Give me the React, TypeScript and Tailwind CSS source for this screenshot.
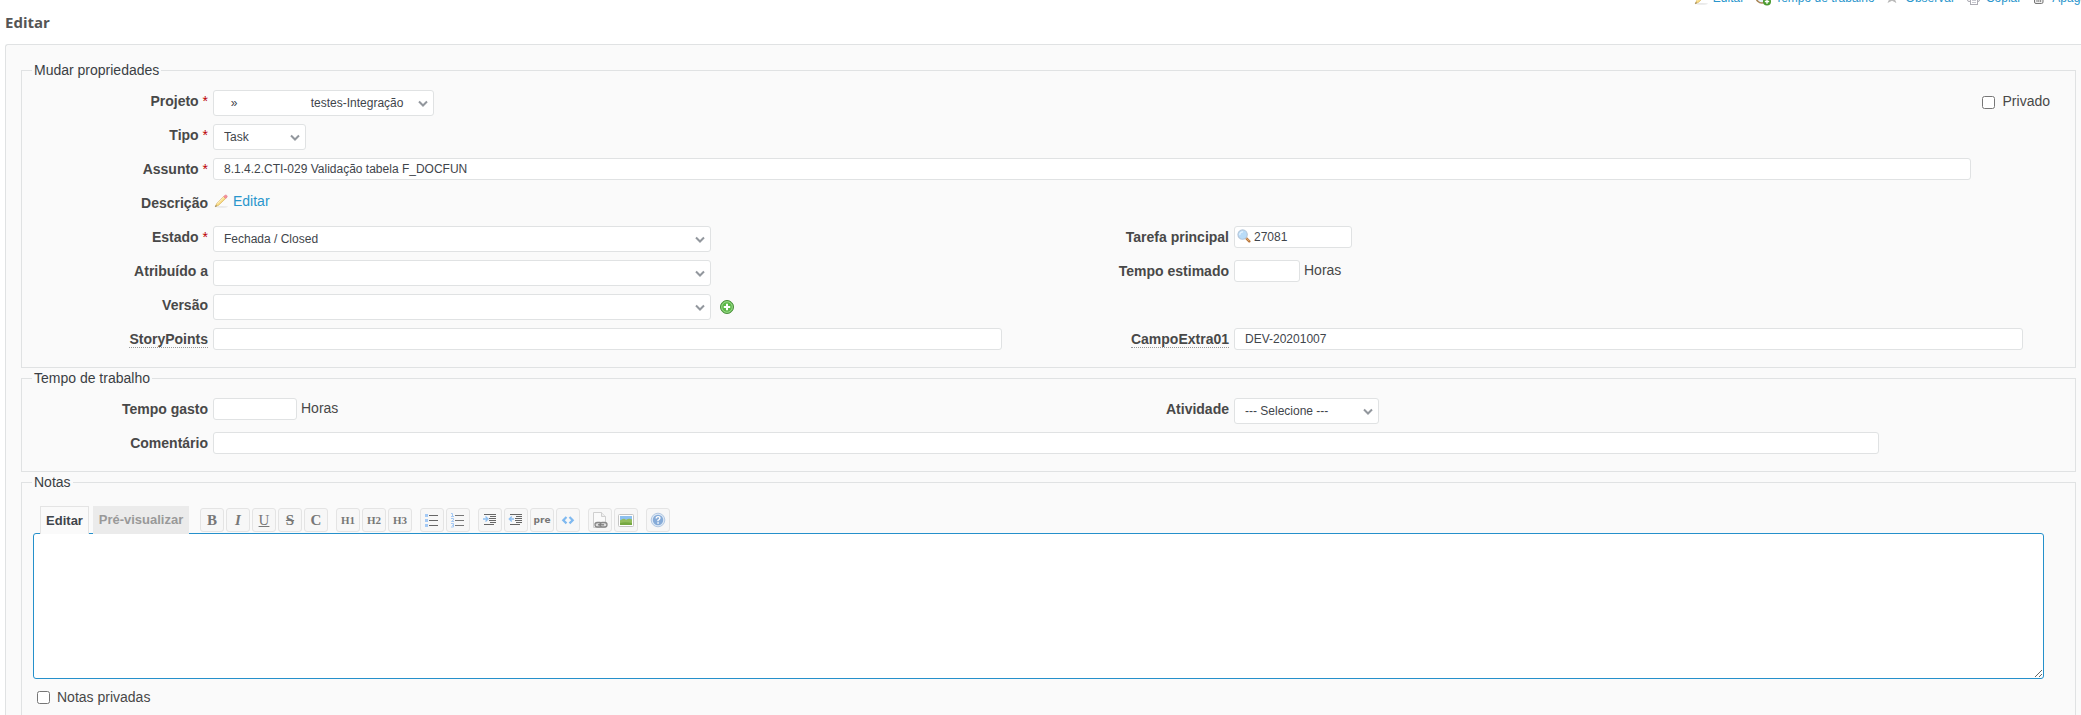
import type { ReactNode } from "react";

/* ---------- Icons ---------- */

function PencilIcon() {
  return (
    <svg width="16" height="16" viewBox="-1 -1 18 18" className="shrink-0">
      <ellipse cx="9" cy="14.500" rx="7" ry="1" fill="#e8e8e8" />
      <path d="M1.500 14.500 3.300 10.800 11 3 13.200 5.200 5.300 12.800z" fill="#f9dc84" stroke="#d3a94e" strokeWidth=".7" />
      <path d="M4 11 11.400 3.800" stroke="#fff6d0" strokeWidth="1" />
      <path d="M11 3 12.500 1.500q1-.8 2 .2t.3 2.100L13.200 5.200z" fill="#f4909a" stroke="#e07c88" strokeWidth=".6" />
      <path d="M1.500 14.500 2.200 12.700 3.400 13.600z" fill="#555" />
    </svg>
  );
}

function ClockAddIcon() {
  return (
    <svg width="16" height="16" viewBox="0 0 16 16" className="shrink-0">
      <circle cx="7" cy="7" r="6" fill="#e8f1fa" stroke="#a98555" strokeWidth="1.600" />
      <path d="M7 3v4l3 1" fill="none" stroke="#666" />
      <circle cx="12" cy="11.500" r="4" fill="#4a9a2f" />
      <path d="M12 9.300v4.400M9.800 11.500h4.400" stroke="#fff" strokeWidth="1.400" />
    </svg>
  );
}

function StarIcon() {
  return (
    <svg width="16" height="16" viewBox="0 0 16 16" className="shrink-0">
      <path d="m6 2 1.600 4H12L8.600 8.800 10.500 13 6 10.700 1.500 13 3.400 8.800 0 6h4.400z" fill="#b9b9b9" />
    </svg>
  );
}

function PrinterIcon() {
  return (
    <svg width="16" height="16" viewBox="0 0 16 16" className="shrink-0">
      <rect x="1.500" y="5.500" width="12" height="6" rx="1.500" fill="#f2f2f2" stroke="#adadb5" />
      <rect x="4.500" y="8.500" width="7" height="6" fill="#fff" stroke="#adadb5" />
      <path d="M6 10.500h4M6 12.500h4" stroke="#c8c8d0" />
    </svg>
  );
}

function TrashIcon() {
  return (
    <svg width="16" height="16" viewBox="0 0 16 16" className="shrink-0">
      <path d="M2.500 4.500h8.500V12q0 1.500-1.500 1.500H4Q2.500 13.500 2.500 12z" fill="#eee" stroke="#777" />
      <path d="M5 6v6M6.800 6v6M8.600 6v6" stroke="#888" />
    </svg>
  );
}

function SearchIcon() {
  return (
    <svg width="14" height="14" viewBox="0 0 15 15">
      <path d="m9.800 9.800 3.400 3.400" stroke="#b8743a" strokeWidth="2.600" strokeLinecap="round" />
      <path d="m10 9.800 3 3" stroke="#eab676" strokeWidth="1" />
      <circle cx="6" cy="6" r="5" fill="#b9dcf8" stroke="#b4c6da" strokeWidth="1.200" />
      <path d="M3 6.500A3.200 3.200 0 0 1 6.500 3" fill="none" stroke="#e6f4ff" strokeWidth="1.400" />
    </svg>
  );
}

function AddIcon() {
  return (
    <svg width="16" height="16" viewBox="0 0 16 16">
      <circle cx="8" cy="8" r="6.500" fill="#5cb848" stroke="#4b8f3c" />
      <circle cx="8" cy="8" r="5.300" fill="none" stroke="#a5dc96" strokeWidth=".9" />
      <path d="M8 4.800v6.400M4.800 8h6.400" stroke="#fff" strokeWidth="2" />
    </svg>
  );
}

function ChevronIcon() {
  return (
    <svg width="10" height="8" viewBox="0 0 10 8" className="pointer-events-none absolute right-[6px] top-[10px]">
      <path d="M1 1.500 5 5.500 9 1.500" fill="none" stroke="#92979d" strokeWidth="2" />
    </svg>
  );
}

function BulletListIcon() {
  return (
    <svg width="16" height="16" viewBox="0 0 16 16">
      <path d="M1 2h3v3H1zM1 7h3v3H1zM1 12h3v3H1z" fill="#a3c9f5" />
      <path d="M5 3.500h9M5 8.500h9M5 13.500h9" stroke="#666" />
    </svg>
  );
}

function NumberListIcon() {
  return (
    <svg width="16" height="16" viewBox="0 0 16 16">
      <path
        d="M1 1.500h1.500V4M1 4.500h3M1 6.500h2.500V8L1.500 9.500H4M1 11.500h2.500v3.500H1M2 13.300h1.500"
        fill="none"
        stroke="#a3c9f5"
      />
      <path d="M5 3.500h9M5 8.500h9M5 13.500h9" stroke="#777" />
    </svg>
  );
}

function QuoteIcon() {
  return (
    <svg width="16" height="16" viewBox="0 0 16 16">
      <path d="M2 2.500h12M8 4.500h6M7 6.500h7M7 8.500h7M8 10.500h6M2 12.500h10" stroke="#666" />
      <path d="M1 7h4M3.500 4.500 6 7 3.500 9.500" fill="none" stroke="#8fc0f2" strokeWidth="1.400" />
    </svg>
  );
}

function UnquoteIcon() {
  return (
    <svg width="16" height="16" viewBox="0 0 16 16">
      <path d="M2 2.500h12M8 4.500h6M7 6.500h7M7 8.500h7M8 10.500h6M2 12.500h10" stroke="#666" />
      <path d="M6 7H2M3.800 4.500 1.300 7l2.500 2.500" fill="none" stroke="#8fc0f2" strokeWidth="1.400" />
    </svg>
  );
}

function CodeIcon() {
  return (
    <svg width="16" height="16" viewBox="0 0 16 16">
      <path d="M6.500 5 3.300 8.200l3.200 3.200M9.500 5l3.200 3.200-3.200 3.200" fill="none" stroke="#7fb9f0" strokeWidth="2.200" />
    </svg>
  );
}

function LinkIcon() {
  return (
    <svg width="16" height="16" viewBox="0 0 16 16">
      <path d="M1.500.500h8l4 4v11h-12z" fill="#fafafa" stroke="#cfcfcf" />
      <path d="M9.500.500v4h4" fill="#eee" stroke="#cfcfcf" />
      <rect x="3" y="10.500" width="7" height="4.500" rx="2.200" fill="#ddd" stroke="#888" strokeWidth="1.300" />
      <rect x="8" y="10.500" width="7" height="4.500" rx="2.200" fill="#ddd" stroke="#888" strokeWidth="1.300" />
      <path d="M6 12.800h6" stroke="#777" strokeWidth="1.200" />
    </svg>
  );
}

function ImageIcon() {
  return (
    <svg width="16" height="16" viewBox="0 0 16 16">
      <rect x=".5" y="2.500" width="15" height="12" rx="1" fill="#fff" stroke="#c4c4c4" />
      <path d="M2 4h12v5H2z" fill="#8cc0f0" />
      <path d="M2 8.500q4-3 6-.5 3-2 6-.5V13H2z" fill="#93bd5c" />
      <path d="M2 11q5-1.500 12 0v2H2z" fill="#76a842" />
    </svg>
  );
}

function HelpIcon() {
  return (
    <svg width="16" height="16" viewBox="0 0 16 16">
      <circle cx="8" cy="8" r="6.800" fill="#dce8f5" stroke="#b3c8e2" />
      <circle cx="8" cy="8" r="5.200" fill="#86abd8" />
      <path d="M6.200 6.600q0-2 1.900-2t1.800 1.700Q9.900 7.300 8 8.300v.9" fill="none" stroke="#fff" strokeWidth="1.400" />
      <path d="M7.300 10.300h1.500v1.400H7.300z" fill="#fff" />
    </svg>
  );
}

/* ---------- Form pieces ---------- */

const inputClass =
  "h-[22px] rounded-[3px] border border-[#e0e2e3] bg-white px-[10px] text-[12px] text-[#3f454b] outline-none";

interface FieldProps {
  id: string;
  label: string;
  required?: boolean;
  hint?: boolean;
  children: ReactNode;
}

function Field({ id, label, required, hint, children }: FieldProps) {
  return (
    <div className="flex h-[34px] items-start gap-[5px]">
      <label htmlFor={id} className="w-[186px] shrink-0 pt-px text-right font-bold leading-[20px]">
        <span className={hint ? "border-b border-dotted border-[#999]" : ""}>{label}</span>
        {required && <span className="font-normal text-[#bb0000]"> *</span>}
      </label>
      <div className="flex min-w-0 flex-1 items-start">{children}</div>
    </div>
  );
}

interface SelectProps {
  id: string;
  width: string;
  options?: string[];
}

function Select({ id, width, options = [""] }: SelectProps) {
  return (
    <div className={`relative ${width}`}>
      <select
        id={id}
        className="block h-[26px] w-full appearance-none rounded-[3px] border border-[#e0e2e3] bg-white pl-[10px] pr-6 text-[12px] text-[#3f454b] outline-none"
      >
        {options.map((option) => (
          <option key={option}>{option}</option>
        ))}
      </select>
      <ChevronIcon />
    </div>
  );
}

function Section({ title, children }: { title: string; children: ReactNode }) {
  return (
    <fieldset className="mb-[2px] min-w-0 border border-[#e0e2e3]">
      <legend className="ml-[10px] px-[2px] leading-[17px] text-[#3a3f44]">{title}</legend>
      {children}
    </fieldset>
  );
}

function ToolButton({ title, children }: { title: string; children: ReactNode }) {
  return (
    <button
      type="button"
      title={title}
      className="flex h-6 w-6 items-center justify-center rounded-[3px] border border-[#e4e4e4] bg-[#f7f7f7] font-['Liberation_Serif',serif] text-[15px] font-bold leading-none text-[#777]"
    >
      {children}
    </button>
  );
}

const toolGroups: { title: string; icon: ReactNode }[][] = [
  [
    { title: "Negrito", icon: "B" },
    { title: "Itálico", icon: <i>I</i> },
    { title: "Sublinhado", icon: <span className="font-normal underline">U</span> },
    { title: "Riscado", icon: <s>S</s> },
    { title: "Código em linha", icon: "C" },
  ],
  [
    { title: "Cabeçalho 1", icon: <span className="text-[11px]">H1</span> },
    { title: "Cabeçalho 2", icon: <span className="text-[11px]">H2</span> },
    { title: "Cabeçalho 3", icon: <span className="text-[11px]">H3</span> },
  ],
  [
    { title: "Lista não ordenada", icon: <BulletListIcon /> },
    { title: "Lista ordenada", icon: <NumberListIcon /> },
  ],
  [
    { title: "Citar", icon: <QuoteIcon /> },
    { title: "Remover citação", icon: <UnquoteIcon /> },
    {
      title: "Texto pré-formatado",
      icon: <span className="font-['DejaVu_Sans',sans-serif] text-[9px] font-bold">pre</span>,
    },
    { title: "Código", icon: <CodeIcon /> },
  ],
  [
    { title: "Ligação", icon: <LinkIcon /> },
    { title: "Imagem", icon: <ImageIcon /> },
  ],
  [{ title: "Ajuda", icon: <HelpIcon /> }],
];

const actions = [
  { label: "Editar", icon: <PencilIcon /> },
  { label: "Tempo de trabalho", icon: <ClockAddIcon /> },
  { label: "Observar", icon: <StarIcon /> },
  { label: "Copiar", icon: <PrinterIcon /> },
  { label: "Apagar", icon: <TrashIcon /> },
];

const project = "\u00a0\u00a0»" + "\u00a0".repeat(22) + "testes-Integração";

export default function App() {
  return (
    <main className="h-screen overflow-hidden bg-white pl-[5px] font-['Liberation_Sans',Arial,sans-serif] text-[14px] text-[#484848]">
      {/* Issue actions, scrolled mostly out of view */}
      <nav className="-mr-[10px] flex h-[6px] items-end justify-end gap-[11px] text-[12px] leading-[14px]">
        {actions.map(({ label, icon }) => (
          <a key={label} href="#" className="flex shrink-0 items-center gap-1 text-[#2996cc]">
            {icon}
            {label}
          </a>
        ))}
      </nav>

      <h3 className="mb-[11px] mt-[5px] font-['Open_Sans',sans-serif] text-[15px] font-bold leading-[22px] text-[#555]">
        Editar
      </h3>

      <form className="rounded-tl-[3px] border-l border-t border-[#e0e2e3] bg-[#fafafa] pb-3 pl-[15px] pr-[5px] pt-[17px]">
        <Section title="Mudar propriedades">
          <div className="pb-[5px] pr-[11px] pt-[11px]">
            <div className="flex items-start justify-between">
              <Field id="project" label="Projeto" required>
                <Select id="project" width="w-[221px]" options={[project]} />
              </Field>
              <label className="mr-[14px] flex items-start gap-2 pt-px leading-[20px]">
                <input type="checkbox" className="mt-[5px] h-[13px] w-[13px]" />
                Privado
              </label>
            </div>
            <Field id="tracker" label="Tipo" required>
              <Select id="tracker" width="w-[93px]" options={["Task"]} />
            </Field>
            <Field id="subject" label="Assunto" required>
              <input
                id="subject"
                type="text"
                defaultValue="8.1.4.2.CTI-029 Validação tabela F_DOCFUN"
                className={`${inputClass} w-[95%]`}
              />
            </Field>
            <Field id="description" label="Descrição">
              <a id="description" href="#" className="flex items-center gap-1 leading-[18px] text-[#2996cc]">
                <PencilIcon />
                Editar
              </a>
            </Field>

            <div className="grid grid-cols-2">
              <div>
                <Field id="status" label="Estado" required>
                  <Select id="status" width="w-[60%]" options={["Fechada / Closed"]} />
                </Field>
                <Field id="assignee" label="Atribuído a">
                  <Select id="assignee" width="w-[60%]" />
                </Field>
                <Field id="version" label="Versão">
                  <Select id="version" width="w-[60%]" />
                  <button type="button" title="Nova versão" className="ml-2 mt-[5px]">
                    <AddIcon />
                  </button>
                </Field>
                <Field id="story-points" label="StoryPoints" hint>
                  <input id="story-points" type="text" className={`${inputClass} w-[95%]`} />
                </Field>
              </div>
              <div>
                <Field id="parent" label="Tarefa principal">
                  <div className="relative">
                    <input
                      id="parent"
                      type="text"
                      defaultValue="27081"
                      className="block h-[22px] w-[118px] rounded-[3px] border border-[#e0e2e3] bg-white pl-[19px] text-[12px] text-[#3f454b] outline-none"
                    />
                    <span className="absolute left-[3px] top-[3px]">
                      <SearchIcon />
                    </span>
                  </div>
                </Field>
                <div className="mb-[34px]">
                  <Field id="estimate" label="Tempo estimado">
                    <input id="estimate" type="text" className={`${inputClass} w-[66px]`} />
                    <span className="ml-1 leading-[20px]">Horas</span>
                  </Field>
                </div>
                <Field id="extra" label="CampoExtra01" hint>
                  <input id="extra" type="text" defaultValue="DEV-20201007" className={`${inputClass} w-[95%]`} />
                </Field>
              </div>
            </div>
          </div>
        </Section>

        <Section title="Tempo de trabalho">
          <div className="pb-[5px] pr-[11px] pt-[11px]">
            <div className="grid grid-cols-2">
              <Field id="hours" label="Tempo gasto">
                <input id="hours" type="text" className={`${inputClass} w-[84px]`} />
                <span className="ml-1 leading-[20px]">Horas</span>
              </Field>
              <Field id="activity" label="Atividade">
                <Select id="activity" width="w-[145px]" options={["--- Selecione ---"]} />
              </Field>
            </div>
            <Field id="comment" label="Comentário">
              <input id="comment" type="text" className={`${inputClass} w-[90%]`} />
            </Field>
          </div>
        </Section>

        <Section title="Notas">
          <div className="px-[11px] pb-4 pt-[15px]">
            {/* The tabs overlap the editor's top border */}
            <div className="relative -mb-px flex h-7 items-stretch pl-[7px]">
              <button
                type="button"
                className="mr-1 w-[49px] border border-b-0 border-[#e4e4e4] bg-[#fafafa] text-[13px] font-bold text-[#3f454b]"
              >
                Editar
              </button>
              <button type="button" className="mr-[11px] w-24 bg-[#ebebeb] text-[13px] font-bold text-[#999]">
                Pré-visualizar
              </button>
              <div className="flex gap-2 pt-[2px]">
                {toolGroups.map((group, i) => (
                  <div key={i} className="flex gap-[2px]">
                    {group.map(({ title, icon }) => (
                      <ToolButton key={title} title={title}>
                        {icon}
                      </ToolButton>
                    ))}
                  </div>
                ))}
              </div>
            </div>
            <textarea
              aria-label="Notas"
              autoFocus
              className="block h-[146px] w-[99%] resize-y rounded-[3px] border border-[#2590cb] bg-white p-[2px] text-[13px] outline-none"
            />
            <label className="mt-[8px] flex items-start gap-[7px] pl-1 leading-[20px]">
              <input type="checkbox" className="mt-[4px] h-[13px] w-[13px]" />
              Notas privadas
            </label>
          </div>
        </Section>
      </form>
    </main>
  );
}
